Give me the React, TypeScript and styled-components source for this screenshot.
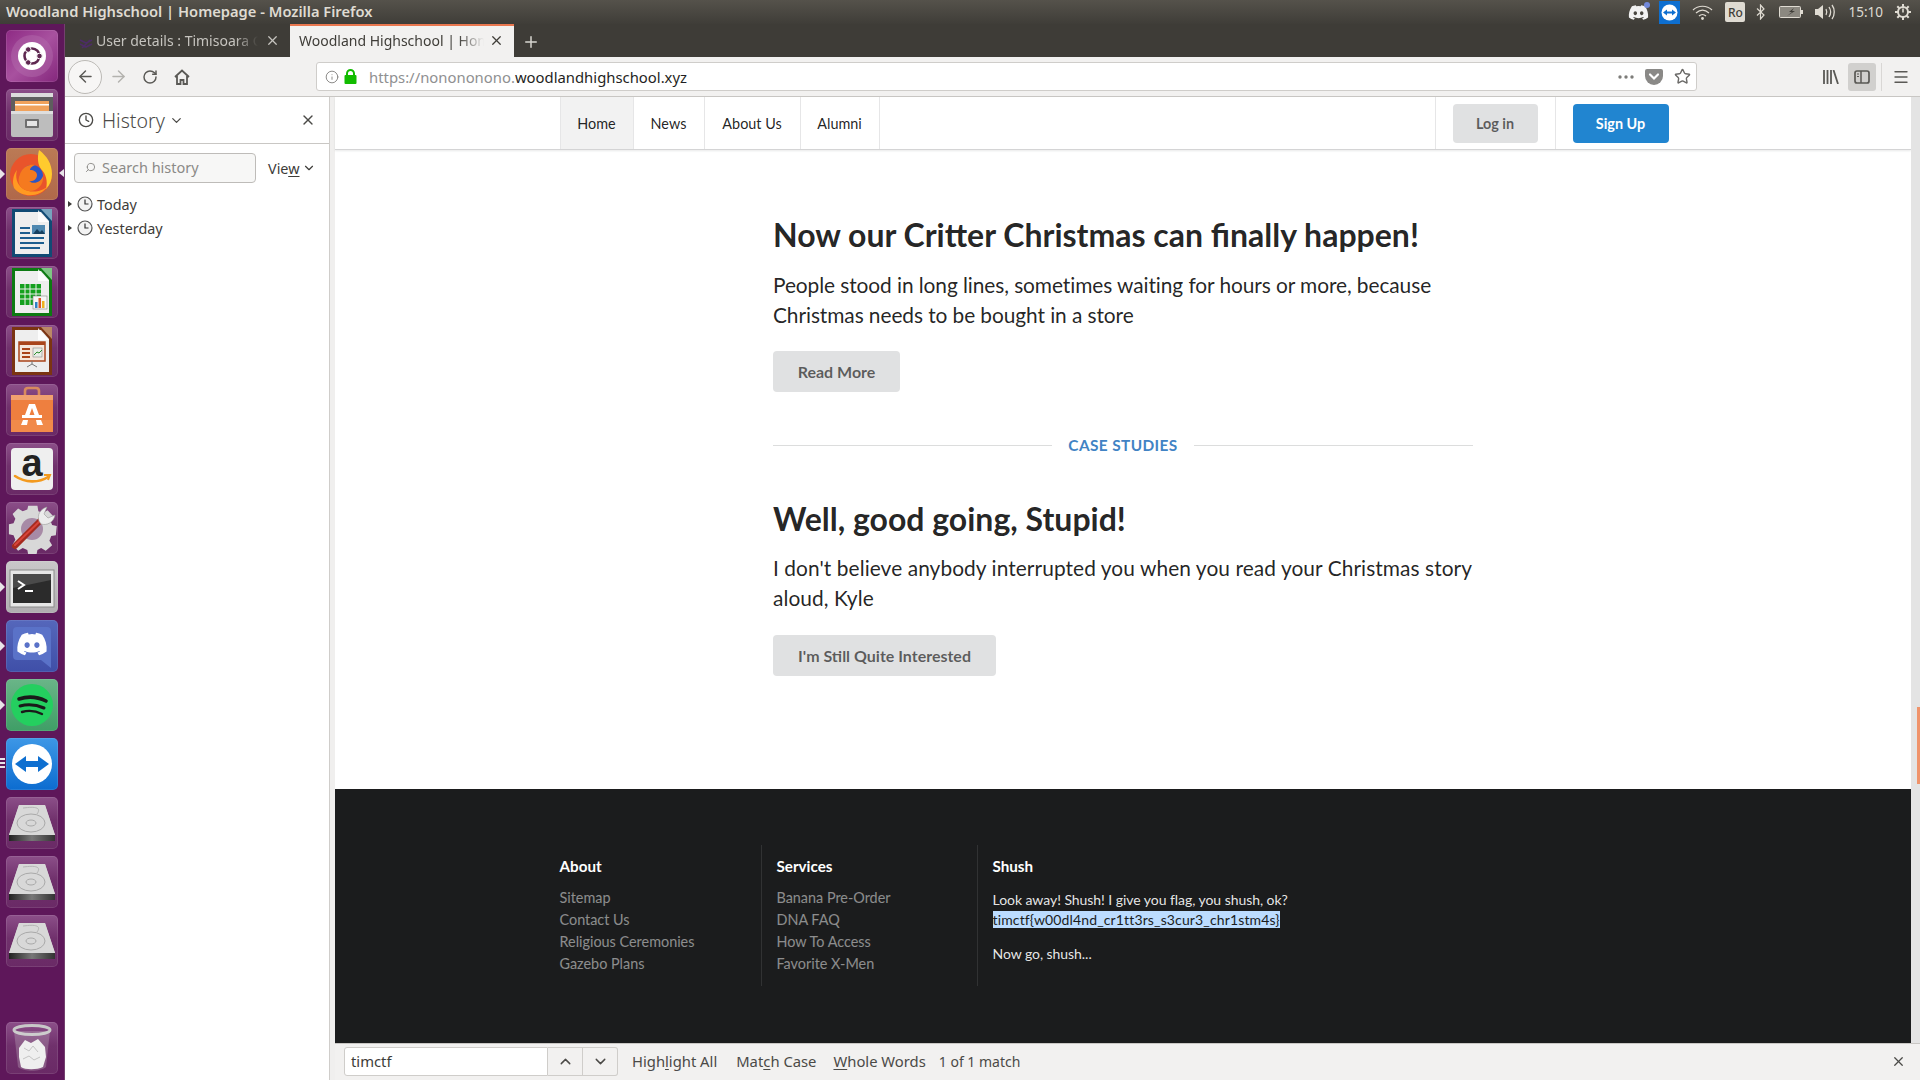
import React from 'react';
import styled, { createGlobalStyle } from 'styled-components';
import { FaDiscord } from 'react-icons/fa';
import { ArrowLeft, ArrowRight, RotateCw, Info, Star, Menu, X, ChevronDown, ChevronUp, Plus, Search, Clock } from 'lucide-react';

const GlobalStyle = createGlobalStyle`
    html, body {
        margin: 0;
        padding: 0;
        width: 1920px;
        height: 1080px;
        overflow: hidden;
        background: #fff;
    }
    * { box-sizing: border-box; }
`;

const uiFont = `'Noto Sans', 'Open Sans', sans-serif`;
const siteFont = `Lato, 'Liberation Sans', sans-serif`;

const Screen = styled.div`
    width: 1920px;
    height: 1080px;
    display: flex;
    flex-direction: column;
    font-family: ${uiFont};
`;

/* ---- ubuntu top panel ---- */
const TopPanel = styled.div`
    height: 24px;
    flex: none;
    display: flex;
    align-items: center;
    padding-left: 6px;
    background: linear-gradient(#55524b, #3f3d38);
`;

const WindowTitle = styled.div`
    flex: 1;
    color: #dfdbd2;
    font-size: 14.7px;
    font-weight: 600;
    padding-bottom: 2px;
`;

const Tray = styled.div`
    display: flex;
    align-items: center;
    height: 24px;
`;

const TrayItem = styled.div<{ $w: number; $mr?: number; $ml?: number }>`
    width: ${p => p.$w}px;
    margin-right: ${p => p.$mr || 0}px;
    margin-left: ${p => p.$ml || 0}px;
    height: 24px;
    display: flex;
    align-items: center;
    justify-content: center;
    position: relative;
`;

const TrayBadge = styled.span`
    position: absolute;
    right: 0;
    top: 2px;
    width: 6px;
    height: 6px;
    border-radius: 50%;
    background: #7289da;
`;

const TVSquare = styled.div`
    width: 21px;
    height: 23px;
    background: #0e6fd0;
    display: flex;
    align-items: center;
    justify-content: center;
`;

const RoBox = styled.div`
    width: 20px;
    height: 20px;
    border-radius: 2px;
    background: #dfdbd2;
    color: #3f3d38;
    font-size: 12px;
    font-weight: 500;
    display: flex;
    align-items: center;
    justify-content: center;
`;

const Time = styled.span`
    color: #dfdbd2;
    font-size: 13.5px;
`;

const Desktop = styled.div`
    flex: 1;
    display: flex;
    min-height: 0;
`;

/* ---- launcher ---- */
const Launcher = styled.div`
    width: 65px;
    flex: none;
    background: #5e175a;
    border-right: 1px solid #74406f;
    padding: 6px 0 0 6px;
    display: flex;
    flex-direction: column;
    gap: 7px;
`;

const Tile = styled.div<{ $bg?: string }>`
    width: 52px;
    height: 52px;
    border-radius: 5px;
    position: relative;
    flex: none;
    background: ${p => p.$bg || 'linear-gradient(#8c4f89, #70316c 45%, #6a2a66)'};
    box-shadow: inset 0 0 0 1px rgba(255, 255, 255, 0.1);
    svg { display: block; }
`;

const LauncherSpacer = styled.div`
    height: 41px;
    flex: none;
`;

const PipLeft = styled.span`
    position: absolute;
    left: -6px;
    top: 21px;
    width: 0;
    height: 0;
    border-top: 5px solid transparent;
    border-bottom: 5px solid transparent;
    border-left: 5px solid #e8e4e8;
`;

const PipRight = styled.span`
    position: absolute;
    right: -6px;
    top: 21px;
    width: 0;
    height: 0;
    border-top: 4px solid transparent;
    border-bottom: 4px solid transparent;
    border-right: 5px solid #e8e4e8;
`;

const PipDots = styled.span`
    position: absolute;
    left: -6px;
    top: 20px;
    width: 5px;
    height: 11px;
    background: repeating-linear-gradient(#e8e4e8 0 2px, transparent 2px 4px);
`;

const UbuntuIcon = () => (
    <svg width="52" height="52" viewBox="0 0 52 52">
        <circle cx="26" cy="26" r="21" fill="#b46cae" opacity="0.45" />
        <circle cx="26" cy="26" r="14" fill="#fff" />
        <circle cx="26" cy="26" r="7.5" fill="none" stroke="#5e2750" strokeWidth="2.6" />
        <circle cx="33.5" cy="26" r="2.8" fill="#5e2750" stroke="#fff" />
        <circle cx="22.2" cy="19.5" r="2.8" fill="#5e2750" stroke="#fff" />
        <circle cx="22.2" cy="32.5" r="2.8" fill="#5e2750" stroke="#fff" />
    </svg>
);

const FilesIcon = () => (
    <svg width="52" height="52" viewBox="0 0 52 52">
        <rect x="5" y="4" width="42" height="20" rx="2" fill="#5e5e5e" />
        <rect x="5" y="4" width="42" height="4" fill="#dcdcdc" />
        <rect x="9" y="12" width="34" height="11" fill="#f0a25c" />
        <rect x="9" y="15" width="34" height="1.5" fill="#fff" />
        <rect x="5" y="22" width="42" height="26" rx="2" fill="#bdbdbd" />
        <rect x="5" y="22" width="42" height="3" fill="#dedede" />
        <rect x="19" y="30" width="14" height="9" rx="1" fill="#6e6e6e" />
        <rect x="21" y="32" width="10" height="5" fill="#e4e4e4" />
    </svg>
);

const FirefoxIcon = () => (
    <svg width="52" height="52" viewBox="0 0 52 52">
        <circle cx="25" cy="27" r="21" fill="#e9542b" />
        <path d="M33 2c8 6 13 14 13 24 0 6-2 11-6 15 2-8 0-15-5-20-3-4-4-11-2-19z" fill="#ffcb2e" />
        <path d="M8 40c8 10 26 10 34-2-6 6-18 8-26 2-5-4-7-11-5-18-4 5-5 12-3 18z" fill="#ff9a22" />
        <circle cx="26" cy="28" r="11" fill="#2c55c5" />
        <path d="M15 24c3-6 9-8 14-7-3 1-5 3-5 5 4 0 7 2 7 5 0 4-4 7-8 6 5 4 12 1 14-5 1 8-5 15-13 15-8 0-13-7-11-14 1-2 1-4 2-5z" fill="#f57a1f" />
    </svg>
);

const DocIcon = ({ edge, corner, children }: { edge: string; corner: string; children: React.ReactNode }) => (
    <svg width="52" height="52" viewBox="0 0 52 52">
        <path d="M6 2h32l8 10v38H6z" fill={edge} />
        <path d="M35 2h11v12z" fill={corner} />
        <path d="M9 5h26l8 9v33H9z" fill="#eeeeee" />
        <path d="M32 3l11 12-11 0z" fill="#fff" opacity="0.8" />
        {children}
    </svg>
);

const WriterIcon = () => (
    <DocIcon edge="#114a74" corner="#77a3bd">
        <rect x="14" y="20" width="10" height="2" fill="#1d5e8f" />
        <rect x="14" y="25" width="10" height="2" fill="#1d5e8f" />
        <rect x="14" y="30" width="24" height="2" fill="#1d5e8f" />
        <rect x="14" y="35" width="24" height="2" fill="#1d5e8f" />
        <rect x="14" y="40" width="20" height="2" fill="#1d5e8f" />
        <rect x="26" y="18" width="13" height="9" fill="#4f88b0" />
        <path d="M27 27l4-5 3 3 2-2 3 4z" fill="#17405f" />
    </DocIcon>
);

const CalcIcon = () => (
    <DocIcon edge="#0d7a12" corner="#7fc584">
        <rect x="14" y="18" width="21" height="21" fill="#14a01e" />
        <path d="M19 18v21M24 18v21M30 18v21M14 23h21M14 28h21M14 33h21" stroke="#eee" strokeWidth="1" />
        <rect x="27" y="30" width="14" height="13" fill="#f5f5f5" stroke="#888" strokeWidth="0.6" />
        <rect x="29" y="36" width="2.5" height="6" fill="#2f7fc4" />
        <rect x="32.5" y="32" width="2.5" height="10" fill="#d9552a" />
        <rect x="36" y="35" width="2.5" height="7" fill="#eeb21e" />
    </DocIcon>
);

const ImpressIcon = () => (
    <DocIcon edge="#7b3412" corner="#bb8866">
        <rect x="13" y="17" width="26" height="19" fill="#f4e6dc" stroke="#a9441b" strokeWidth="1.5" />
        <rect x="13" y="17" width="26" height="3" fill="#a9441b" />
        <rect x="16" y="23" width="8" height="2" fill="#a9441b" />
        <rect x="16" y="27" width="8" height="2" fill="#a9441b" />
        <rect x="16" y="31" width="8" height="2" fill="#a9441b" />
        <rect x="27" y="23" width="9" height="9" fill="#e8ece6" stroke="#7a7a7a" strokeWidth="0.5" />
        <path d="M28 30l3-3 2 1 3-3" stroke="#2a8c2a" fill="none" />
        <path d="M26 36v3M26 39l-5 3M26 39l5 3" stroke="#777" />
    </DocIcon>
);

const StoreIcon = () => (
    <svg width="52" height="52" viewBox="0 0 52 52">
        <path d="M19 12V7c0-2 1-3 3-3h8c2 0 3 1 3 3v5" fill="none" stroke="#d88a5e" strokeWidth="2.6" />
        <path d="M5 11h42v37H5z" fill="#ee7f3f" />
        <path d="M5 11h42v5H5z" fill="#f0a06f" />
        <path d="M5 36h42v12H5z" fill="#f18a4a" />
        <path d="M23 20h6l4 11h3v3H16v-3h3zM26 24l-2.5 7h5z" fill="#fff" fillRule="evenodd" />
        <path d="M17 36h5l-1 5h-6zM30 36h5l2 5h-6z" fill="#fff" />
    </svg>
);

const AmazonLetter = styled.text`
    font-family: 'Liberation Sans', sans-serif;
    font-size: 38px;
    font-weight: 700;
`;

const AmazonIcon = () => (
    <svg width="52" height="52" viewBox="0 0 52 52">
        <rect x="5" y="5" width="42" height="42" rx="4" fill="#efefef" />
        <AmazonLetter x="26" y="33" textAnchor="middle" fill="#222">a</AmazonLetter>
        <path d="M9 33c10 7 24 7 33 1" fill="none" stroke="#f39a1f" strokeWidth="2.6" strokeLinecap="round" />
        <path d="M38 32l6 0-2 5" fill="none" stroke="#f39a1f" strokeWidth="2" />
    </svg>
);

const ToolsIcon = () => (
    <svg width="52" height="52" viewBox="0 0 52 52">
        <path d="M22 3h10l1 6 5 2 5-3 6 6-3 5 2 5 5 1-1 10-5 1-2 5 3 5-7 6-5-3-4 2-1 5H22l-1-5-5-2-5 3-6-7 3-5-2-5-5-1V23l5-1 2-5-3-5 6-6 5 3 5-2z" fill="#d8d8d8" transform="translate(2 1) scale(0.92)" />
        <circle cx="26" cy="27" r="11" fill="#a78aa6" />
        <path d="M9 44L36 17" stroke="#a52a1e" strokeWidth="6" strokeLinecap="round" />
        <path d="M9 43L36 17" stroke="#d8443a" strokeWidth="2" strokeLinecap="round" />
        <path d="M33 19c-2-6 1-12 8-14l-3 7 4 4 7-3c-1 7-8 11-14 9z" fill="#ececec" stroke="#999" strokeWidth="0.6" />
    </svg>
);

const TerminalIcon = () => (
    <svg width="52" height="52" viewBox="0 0 52 52">
        <rect x="4" y="9" width="44" height="37" fill="#e6e6e6" stroke="#8a8a8a" />
        <rect x="7" y="13" width="38" height="29" fill="#2b2b2b" />
        <path d="M7 13h38v6L7 27z" fill="#4a4a4a" />
        <path d="M12 20l6 4-6 4" fill="none" stroke="#fff" strokeWidth="2" />
        <rect x="19" y="29" width="8" height="2" fill="#fff" />
    </svg>
);

const DiscordIcon = () => (
    <svg width="52" height="52" viewBox="0 0 52 52">
        <path d="M11 7h30a4 4 0 0 1 4 4v37L35 40H11a4 4 0 0 1-4-4V11a4 4 0 0 1 4-4z" fill="#5a72c8" />
        <foreignObject x="10" y="8" width="32" height="32">
            <FaDiscord size={32} color="#fff" />
        </foreignObject>
    </svg>
);

const SpotifyIcon = () => (
    <svg width="52" height="52" viewBox="0 0 52 52">
        <circle cx="26" cy="26" r="21" fill="#24cf5f" />
        <path d="M13 20c9-3 19-2 27 2" fill="none" stroke="#1a1a1a" strokeWidth="3.6" strokeLinecap="round" />
        <path d="M14 27c8-2 17-1 24 2" fill="none" stroke="#1a1a1a" strokeWidth="3" strokeLinecap="round" />
        <path d="M16 33c7-2 14-1 20 2" fill="none" stroke="#1a1a1a" strokeWidth="2.4" strokeLinecap="round" />
    </svg>
);

const TvTrayGlyph = () => (
    <svg width="17" height="17" viewBox="0 0 17 17">
        <circle cx="8.5" cy="8.5" r="8" fill="#fff" />
        <path d="M2 8.5l4-3v2h5v-2l4 3-4 3v-2H6v2z" fill="#0e6fd0" />
    </svg>
);

const TeamViewerIcon = () => (
    <svg width="52" height="52" viewBox="0 0 52 52">
        <circle cx="26" cy="26" r="20" fill="#fff" />
        <path d="M9 26l11-8v5h12v-5l11 8-11 8v-5H20v5z" fill="#0e6fd0" />
    </svg>
);

const DiskIcon = () => (
    <svg width="52" height="52" viewBox="0 0 52 52">
        <path d="M13 8h26l10 30v5H3v-5z" fill="#c8c8c8" />
        <path d="M13 8h26l10 30H3z" fill="#d8d8d8" />
        <ellipse cx="25" cy="26" rx="14" ry="9" fill="none" stroke="#a9a9a9" />
        <ellipse cx="25" cy="26" rx="5" ry="3" fill="none" stroke="#a9a9a9" />
        <path d="M17 11c8-1 20-2 14 6" fill="none" stroke="#b4b4b4" />
        <path d="M3 38h46v6H3z" fill="url(#diskEdge)" />
        <defs>
            <linearGradient id="diskEdge">
                <stop offset="0" stopColor="#222" />
                <stop offset="0.5" stopColor="#777" />
                <stop offset="1" stopColor="#333" />
            </linearGradient>
        </defs>
    </svg>
);

const TrashIcon = () => (
    <svg width="52" height="52" viewBox="0 0 52 52">
        <ellipse cx="26" cy="8" rx="18" ry="4.5" fill="none" stroke="#c8c8c8" strokeWidth="3" />
        <path d="M8 9l4 36c6 5 22 5 28 0l4-36" fill="rgba(220,220,220,0.25)" />
        <path d="M13 26l6-8 6 3 7-4 7 8 1 10-3 10c-6 3-18 3-22 0l-2-10z" fill="#efefef" />
        <path d="M18 26l5 3 4-5 5 6M17 37l6-3 5 4 6-3" fill="none" stroke="#c4c4c4" />
    </svg>
);

/* ---- firefox window ---- */
const Browser = styled.div`
    flex: 1;
    min-width: 0;
    display: flex;
    flex-direction: column;
`;

const TabStrip = styled.div`
    height: 33px;
    flex: none;
    background: #3e3c37;
    display: flex;
    padding-top: 2px;
    padding-left: 5px;
`;

const Tab = styled.div<{ $active?: boolean }>`
    width: ${p => (p.$active ? 224 : 220)}px;
    display: flex;
    align-items: center;
    padding: 0 10px 2px ${p => (p.$active ? 9 : 26)}px;
    position: relative;
    background: ${p => (p.$active ? '#f2f1f0' : 'transparent')};
    color: ${p => (p.$active ? '#3f3d38' : '#c6c4bf')};
    border-top: ${p => (p.$active ? '2px solid #e9774f' : '0')};
    margin-top: ${p => (p.$active ? -2 : 0)}px;
    height: ${p => (p.$active ? 33 : 31)}px;
    font-size: 14px;
`;

const TabLabel = styled.span<{ $mr: number }>`
    flex: 1;
    margin-right: ${p => p.$mr}px;
    white-space: nowrap;
    overflow: hidden;
    -webkit-mask-image: linear-gradient(90deg, #000 86%, transparent);
    mask-image: linear-gradient(90deg, #000 86%, transparent);
`;

const TabFavicon = styled.div`
    position: absolute;
    left: 9px;
    top: 9px;
    width: 14px;
    height: 12px;
`;

const NewTab = styled.div`
    width: 34px;
    display: flex;
    align-items: center;
    justify-content: center;
    color: #d8d6d1;
`;

const Toolbar = styled.div`
    height: 40px;
    flex: none;
    background: #f2f1f0;
    border-bottom: 1px solid #c9c7c4;
    display: flex;
    align-items: center;
    padding-left: 3px;
    color: #5a5955;
`;

const BackButton = styled.div`
    width: 34px;
    height: 34px;
    border-radius: 50%;
    border: 1px solid #bcbab6;
    background: #f7f6f5;
    display: flex;
    align-items: center;
    justify-content: center;
    flex: none;
`;

const ToolButton = styled.div<{ $muted?: boolean; $w?: number; $on?: boolean; $ml?: number }>`
    width: ${p => p.$w || 32}px;
    height: 28px;
    flex: none;
    margin-left: ${p => p.$ml || 0}px;
    border-radius: 3px;
    display: flex;
    align-items: center;
    justify-content: center;
    color: ${p => (p.$muted ? '#b3b2ae' : '#5a5955')};
    background: ${p => (p.$on ? '#d1d0ce' : 'transparent')};
`;

const UrlBar = styled.div`
    width: 1381px;
    margin-left: 118px;
    height: 29px;
    flex: none;
    background: #fff;
    border: 1px solid #cfcdca;
    border-radius: 3px;
    display: flex;
    align-items: center;
    padding-left: 8px;
    font-size: 14.85px;
`;

const UrlText = styled.div`
    flex: 1;
    margin-left: 8px;
    color: #8f9091;
    white-space: nowrap;
    b {
        color: #1f1f23;
        font-weight: 400;
    }
`;

const UrlActions = styled.div`
    display: flex;
    align-items: center;
    gap: 11px;
    padding-right: 5px;
    color: #6b6a68;
`;

const ToolbarEnd = styled.div`
    margin-left: 124px;
    display: flex;
    align-items: center;
`;

const ToolbarDivider = styled.div`
    width: 1px;
    height: 28px;
    background: #d9d7d5;
    margin: 0 5px;
`;

const BrowserBody = styled.div`
    flex: 1;
    min-height: 0;
    display: flex;
`;

/* ---- history sidebar ---- */
const Sidebar = styled.div`
    width: 264px;
    flex: none;
    background: #fff;
    color: #3d3c39;
    font-size: 14.4px;
    display: flex;
    flex-direction: column;
`;

const SidebarHeader = styled.div`
    height: 47px;
    flex: none;
    border-bottom: 1px solid #c9c7c4;
    display: flex;
    align-items: center;
    padding: 0 13px 0 13px;
    color: #4b4a47;
`;

const SidebarTitle = styled.div`
    font-size: 19.5px;
    font-weight: 300;
    margin-left: 8px;
    display: flex;
    align-items: center;
    gap: 4px;
    flex: 1;
`;

const SearchRow = styled.div`
    display: flex;
    align-items: center;
    padding: 9px 0 0 9px;
`;

const SearchBox = styled.div`
    width: 182px;
    height: 30px;
    border: 1px solid #bebcb9;
    border-radius: 4px;
    background: #f7f7f6;
    display: flex;
    align-items: center;
    padding: 0 0 2px 10px;
    gap: 6px;
    color: #8b8a87;
    font-size: 14.5px;
`;

const ViewLabel = styled.div`
    margin-left: 12px;
    display: flex;
    align-items: center;
    gap: 2px;
    font-size: 14.4px;
    u { text-underline-offset: 2px; }
`;

const Tree = styled.div`
    padding-top: 9px;
`;

const TreeRow = styled.div`
    height: 24px;
    display: flex;
    align-items: center;
    padding-left: 3px;
`;

const Twisty = styled.span`
    width: 0;
    height: 0;
    border-top: 3px solid transparent;
    border-bottom: 3px solid transparent;
    border-left: 4px solid #3d3c39;
    margin-right: 5px;
`;

const TreeLabel = styled.span`
    margin-left: 4px;
`;

const Splitter = styled.div`
    width: 6px;
    flex: none;
    background: #f0efee;
    border-left: 1px solid #cfcdca;
`;

const Content = styled.div`
    flex: 1;
    min-width: 0;
    display: flex;
    flex-direction: column;
`;

const Viewport = styled.div`
    flex: 1;
    min-height: 0;
    display: flex;
`;

/* ---- the web page ---- */
const Page = styled.div`
    flex: 1;
    min-width: 0;
    display: flex;
    flex-direction: column;
    font-family: ${siteFont};
    background: #fff;
`;

const NavBar = styled.div`
    height: 53px;
    flex: none;
    border-bottom: 1px solid #d4d4d5;
    box-shadow: 0 1px 2px rgba(34, 36, 38, 0.1);
    display: flex;
    justify-content: center;
`;

const NavInner = styled.div`
    width: 1127px;
    display: flex;
    align-items: stretch;
`;

const NavItem = styled.div<{ $active?: boolean; $w: number; $first?: boolean }>`
    width: ${p => p.$w}px;
    display: flex;
    align-items: center;
    justify-content: center;
    font-size: 14.4px;
    color: rgba(0, 0, 0, 0.87);
    background: ${p => (p.$active ? '#f2f2f2' : 'transparent')};
    border-right: 1px solid #e6e6e7;
    border-left: ${p => (p.$first ? '1px solid #e6e6e7' : '0')};
`;

const NavRight = styled.div`
    margin-left: auto;
    margin-right: 1px;
    display: flex;
    align-items: center;
    height: 100%;
`;

const NavSlot = styled.div`
    height: 100%;
    display: flex;
    align-items: center;
    padding: 0 17px;
    border-left: 1px solid #e6e6e7;
`;

const Button = styled.div<{ $primary?: boolean; $w?: number; $h?: number }>`
    width: ${p => p.$w}px;
    height: ${p => p.$h || 41}px;
    display: flex;
    align-items: center;
    justify-content: center;
    border-radius: 4px;
    font-weight: 700;
    font-size: ${p => (p.$h ? 14.4 : 16)}px;
    background: ${p => (p.$primary ? '#2185d0' : '#e0e1e2')};
    color: ${p => (p.$primary ? '#fff' : 'rgba(0, 0, 0, 0.6)')};
`;

const Main = styled.div`
    flex: 1;
    width: 700px;
    align-self: center;
    padding-top: 65px;
`;

const Heading = styled.h1<{ $mb: number }>`
    margin: 0 0 ${p => p.$mb}px;
    font-size: 32px;
    line-height: 40px;
    font-weight: 700;
    color: rgba(0, 0, 0, 0.87);
`;

const Lead = styled.p<{ $mb: number; $ls: number }>`
    margin: 0 0 ${p => p.$mb}px;
    font-size: 20.9px;
    line-height: 30px;
    letter-spacing: ${p => p.$ls}px;
    color: rgba(0, 0, 0, 0.87);
`;

const Divider = styled.div`
    display: flex;
    align-items: center;
    height: 20px;
    margin: 43px 0 44px;
    gap: 16px;
    font-size: 15.4px;
    font-weight: 700;
    letter-spacing: 0.4px;
    color: #4183c4;
    &::before, &::after {
        content: '';
        flex: 1;
        height: 1px;
        background: #dcdddd;
    }
`;

const Footer = styled.div`
    height: 254px;
    flex: none;
    background: #1b1c1d;
    display: flex;
    justify-content: center;
    padding-top: 56px;
`;

const FooterInner = styled.div`
    width: 1127px;
    height: 141px;
    display: flex;
`;

const FooterCol = styled.div<{ $w: number; $line?: boolean; $first?: boolean }>`
    width: ${p => p.$w}px;
    height: 100%;
    padding-left: ${p => (p.$first ? 0 : 15)}px;
    padding-top: 11px;
    border-right: ${p => (p.$line ? '1px solid #313233' : '0')};
`;

const FooterTitle = styled.div`
    color: #fff;
    font-size: 15.2px;
    font-weight: 700;
    line-height: 20px;
    margin-bottom: 11px;
`;

const FooterLink = styled.div`
    color: rgba(255, 255, 255, 0.5);
    font-size: 14.4px;
    line-height: 22px;
`;

const FooterText = styled.div<{ $mt: number }>`
    color: rgba(255, 255, 255, 0.9);
    font-size: 14px;
    line-height: 20px;
    letter-spacing: -0.05px;
    margin-top: ${p => p.$mt}px;
`;

const Flag = styled.span`
    background: #bcdcff;
    color: #1b1c1d;
    letter-spacing: 0.14px;
`;

const ScrollTrack = styled.div`
    width: 9px;
    flex: none;
    background: #e4e4e4;
    position: relative;
`;

const ScrollMark = styled.div`
    position: absolute;
    right: 0;
    top: 610px;
    width: 3px;
    height: 77px;
    background: #f0936a;
`;

/* ---- find bar ---- */
const FindBar = styled.div`
    height: 37px;
    flex: none;
    background: #f2f1f0;
    border-top: 1px solid #c9c7c4;
    display: flex;
    align-items: center;
    padding: 0 14px 2px 9px;
    font-size: 14.8px;
    color: #4b4a47;
    u { text-underline-offset: 2px; }
`;

const FindInput = styled.div`
    width: 204px;
    height: 29px;
    background: #fff;
    border: 1px solid #cfcdca;
    border-radius: 3px 0 0 3px;
    display: flex;
    align-items: center;
    padding-left: 6px;
    color: #3d3c39;
`;

const FindStep = styled.div<{ $last?: boolean }>`
    width: 35px;
    height: 29px;
    border: 1px solid #cfcdca;
    border-left: 0;
    border-radius: ${p => (p.$last ? '0 3px 3px 0' : '0')};
    display: flex;
    align-items: center;
    justify-content: center;
`;

const FindOption = styled.span<{ $ml: number }>`
    margin-left: ${p => p.$ml}px;
`;

const FindCount = styled.span`
    margin-left: 13px;
    font-size: 14px;
`;

const FindClose = styled.div`
    margin-left: auto;
    display: flex;
`;

const PocketIcon = () => (
    <svg width="18" height="16" viewBox="0 0 18 16">
        <path d="M2 0h14a2 2 0 0 1 2 2v5a9 9 0 0 1-18 0V2a2 2 0 0 1 2-2z" fill="#8a8987" />
        <path d="M5 5.5l4 4 4-4" fill="none" stroke="#fff" strokeWidth="2.2" strokeLinecap="round" />
    </svg>
);

const GreenLock = () => (
    <svg width="13" height="15" viewBox="0 0 13 15">
        <path d="M3 6V4.5a3.5 3.5 0 0 1 7 0V6" fill="none" stroke="#12bc00" strokeWidth="2" />
        <rect x="0.5" y="6" width="12" height="9" rx="1" fill="#12bc00" />
    </svg>
);

const HomeGlyph = () => (
    <svg width="16" height="16" viewBox="0 0 16 16">
        <path d="M1 8l7-6.5L15 8M3 7v8h3.5v-4h3v4H13V7" fill="none" stroke="#5a5955" strokeWidth="1.8" />
    </svg>
);

const LibraryGlyph = () => (
    <svg width="16" height="14" viewBox="0 0 16 14">
        <path d="M1 0v14M4.5 0v14M8 0v14M10.5 0l4.5 14" stroke="#5a5955" strokeWidth="1.8" fill="none" />
    </svg>
);

const SidebarGlyph = () => (
    <svg width="16" height="14" viewBox="0 0 16 14">
        <rect x="1" y="1" width="14" height="12" rx="2" fill="none" stroke="#5a5955" strokeWidth="1.7" />
        <path d="M7 1v12" stroke="#5a5955" strokeWidth="1.5" />
        <path d="M3 4h2M3 6.5h2" stroke="#5a5955" />
    </svg>
);

const TreeClock = () => (
    <svg width="16" height="16" viewBox="0 0 16 16">
        <circle cx="8" cy="8" r="7" fill="#f3f3f3" stroke="#555" strokeWidth="1.2" />
        <path d="M8 3.5V8h3.5" fill="none" stroke="#333" strokeWidth="1.2" />
    </svg>
);

const Wifi = () => (
    <svg width="21" height="15" viewBox="0 0 21 15">
        <path d="M1 5c5-5 14-5 19 0M4 8c4-3.5 9-3.5 13 0M7 11c2-2 5-2 7 0" fill="none" stroke="#dfdbd2" strokeWidth="1.2" />
        <circle cx="10.5" cy="13.5" r="1.4" fill="#dfdbd2" />
    </svg>
);

const Bluetooth = () => (
    <svg width="9" height="16" viewBox="0 0 9 16">
        <path d="M1 4.5l7 6.5-3.5 4V1L8 5l-7 6.5" fill="none" stroke="#dfdbd2" strokeWidth="1.2" />
    </svg>
);

const Battery = () => (
    <svg width="24" height="12" viewBox="0 0 24 12">
        <rect x="0.5" y="0.5" width="21" height="11" rx="1" fill="#8b8880" stroke="#dfdbd2" />
        <rect x="22" y="4" width="2" height="4" fill="#dfdbd2" />
        <path d="M15 2l-5 4h3l-5 4 8-5h-3z" fill="#3f3d38" />
    </svg>
);

const Volume = () => (
    <svg width="20" height="16" viewBox="0 0 20 16">
        <path d="M0 5h3l5-4v14l-5-4H0z" fill="#dfdbd2" />
        <path d="M11 5c1 2 1 4 0 6M14 3c2 3 2 7 0 10M17 1c3 4 3 10 0 14" fill="none" stroke="#dfdbd2" strokeWidth="1.3" />
    </svg>
);

const PowerGear = () => (
    <svg width="16" height="16" viewBox="0 0 16 16">
        <circle cx="8" cy="8" r="5" fill="none" stroke="#dfdbd2" strokeWidth="2" />
        <path d="M8 0v3M8 13v3M0 8h3M13 8h3M2.3 2.3l2 2M11.7 11.7l2 2M2.3 13.7l2-2M11.7 4.3l2-2" stroke="#dfdbd2" strokeWidth="2" />
        <path d="M8 4.5v4" stroke="#dfdbd2" strokeWidth="1.6" />
    </svg>
);

const App = () => (
    <>
        <GlobalStyle />
        <Screen>
            <TopPanel>
                <WindowTitle>Woodland Highschool | Homepage - Mozilla Firefox</WindowTitle>
                <Tray>
                    <TrayItem $w={24} $mr={9}>
                        <FaDiscord size={21} color="#f2f2f2" />
                        <TrayBadge />
                    </TrayItem>
                    <TrayItem $w={21} $mr={12}>
                        <TVSquare><TvTrayGlyph /></TVSquare>
                    </TrayItem>
                    <TrayItem $w={21} $mr={12}><Wifi /></TrayItem>
                    <TrayItem $w={20} $mr={10}><RoBox>Ro</RoBox></TrayItem>
                    <TrayItem $w={10} $mr={14}><Bluetooth /></TrayItem>
                    <TrayItem $w={24} $mr={12}><Battery /></TrayItem>
                    <TrayItem $w={20} $mr={13}><Volume /></TrayItem>
                    <Time>15:10</Time>
                    <TrayItem $w={16} $mr={9} $ml={12}><PowerGear /></TrayItem>
                </Tray>
            </TopPanel>
            <Desktop>
                <Launcher>
                    <Tile $bg="linear-gradient(135deg, #8e2a84, #a8519f 50%, #84277c)"><UbuntuIcon /></Tile>
                    <Tile><FilesIcon /></Tile>
                    <Tile $bg="linear-gradient(#bb7a55, #b0684a)"><PipLeft /><FirefoxIcon /><PipRight /></Tile>
                    <Tile><WriterIcon /></Tile>
                    <Tile><CalcIcon /></Tile>
                    <Tile><ImpressIcon /></Tile>
                    <Tile><StoreIcon /></Tile>
                    <Tile><AmazonIcon /></Tile>
                    <Tile><ToolsIcon /></Tile>
                    <Tile $bg="linear-gradient(#c9c7c9, #b0adb0)"><PipLeft /><TerminalIcon /></Tile>
                    <Tile $bg="linear-gradient(#5567bb, #3f4fa8)"><PipLeft /><DiscordIcon /></Tile>
                    <Tile $bg="linear-gradient(#6ab588, #3f9e66)"><PipLeft /><SpotifyIcon /></Tile>
                    <Tile $bg="linear-gradient(#3d97e6, #0c6cd0)"><PipDots /><TeamViewerIcon /></Tile>
                    <Tile><DiskIcon /></Tile>
                    <Tile><DiskIcon /></Tile>
                    <Tile><DiskIcon /></Tile>
                    <LauncherSpacer />
                    <Tile><TrashIcon /></Tile>
                </Launcher>
                <Browser>
                    <TabStrip>
                        <Tab>
                            <TabFavicon>
                                <svg width="14" height="12" viewBox="0 0 14 12">
                                    <path d="M1 2l6 3 6-3M1 6l6 3 6-3M3 10l8-8" fill="none" stroke="#4c2c66" strokeWidth="1.6" />
                                </svg>
                            </TabFavicon>
                            <TabLabel $mr={7}>User details : Timisoara CTF</TabLabel>
                            <X size={15} />
                        </Tab>
                        <Tab $active>
                            <TabLabel $mr={5}>Woodland Highschool | Homepage</TabLabel>
                            <X size={15} />
                        </Tab>
                        <NewTab><Plus size={18} /></NewTab>
                    </TabStrip>
                    <Toolbar>
                        <BackButton><ArrowLeft size={19} strokeWidth={1.8} /></BackButton>
                        <ToolButton $muted><ArrowRight size={19} strokeWidth={1.8} /></ToolButton>
                        <ToolButton><RotateCw size={16} strokeWidth={2.2} /></ToolButton>
                        <ToolButton><HomeGlyph /></ToolButton>
                        <UrlBar>
                            <Info size={14} strokeWidth={1.5} color="#7d7c79" />
                            <ToolButton $w={22}><GreenLock /></ToolButton>
                            <UrlText>https://nonononono.<b>woodlandhighschool.xyz</b></UrlText>
                            <UrlActions>
                                <svg width="16" height="4" viewBox="0 0 16 4" fill="#7d7c79">
                                    <circle cx="2" cy="2" r="1.7" /><circle cx="8" cy="2" r="1.7" /><circle cx="14" cy="2" r="1.7" />
                                </svg>
                                <PocketIcon />
                                <Star size={17} strokeWidth={2} />
                            </UrlActions>
                        </UrlBar>
                        <ToolbarEnd>
                            <ToolButton $w={20}><LibraryGlyph /></ToolButton>
                            <ToolButton $w={28} $on $ml={7}><SidebarGlyph /></ToolButton>
                            <ToolbarDivider />
                            <ToolButton $w={28}><Menu size={18} strokeWidth={1.8} /></ToolButton>
                        </ToolbarEnd>
                    </Toolbar>
                    <BrowserBody>
                        <Sidebar>
                            <SidebarHeader>
                                <Clock size={16} strokeWidth={2} />
                                <SidebarTitle>History<ChevronDown size={15} /></SidebarTitle>
                                <X size={16} strokeWidth={2} />
                            </SidebarHeader>
                            <SearchRow>
                                <SearchBox><Search size={11} style={{ transform: 'scaleX(-1)' }} />Search history</SearchBox>
                                <ViewLabel><span>Vie<u>w</u></span><ChevronDown size={14} /></ViewLabel>
                            </SearchRow>
                            <Tree>
                                <TreeRow><Twisty /><TreeClock /><TreeLabel>Today</TreeLabel></TreeRow>
                                <TreeRow><Twisty /><TreeClock /><TreeLabel>Yesterday</TreeLabel></TreeRow>
                            </Tree>
                        </Sidebar>
                        <Splitter />
                        <Content>
                            <Viewport>
                                <Page>
                                    <NavBar>
                                        <NavInner>
                                            <NavItem $w={74} $active $first>Home</NavItem>
                                            <NavItem $w={71}>News</NavItem>
                                            <NavItem $w={96}>About Us</NavItem>
                                            <NavItem $w={79}>Alumni</NavItem>
                                            <NavRight>
                                                <NavSlot><Button $w={85} $h={39}>Log in</Button></NavSlot>
                                                <NavSlot><Button $w={96} $h={39} $primary>Sign Up</Button></NavSlot>
                                            </NavRight>
                                        </NavInner>
                                    </NavBar>
                                    <Main>
                                        <Heading $mb={15}>Now our Critter Christmas can finally happen!</Heading>
                                        <Lead $mb={21} $ls={-0.085}>People stood in long lines, sometimes waiting for hours or more, because Christmas needs to be bought in a store</Lead>
                                        <Button $w={127}>Read More</Button>
                                        <Divider>CASE STUDIES</Divider>
                                        <Heading $mb={14}>Well, good going, Stupid!</Heading>
                                        <Lead $mb={22} $ls={0.066}>I don't believe anybody interrupted you when you read your Christmas story aloud, Kyle</Lead>
                                        <Button $w={223}>I'm Still Quite Interested</Button>
                                    </Main>
                                    <Footer>
                                        <FooterInner>
                                            <FooterCol $w={202} $line $first>
                                                <FooterTitle>About</FooterTitle>
                                                <FooterLink>Sitemap</FooterLink>
                                                <FooterLink>Contact Us</FooterLink>
                                                <FooterLink>Religious Ceremonies</FooterLink>
                                                <FooterLink>Gazebo Plans</FooterLink>
                                            </FooterCol>
                                            <FooterCol $w={216} $line>
                                                <FooterTitle>Services</FooterTitle>
                                                <FooterLink>Banana Pre-Order</FooterLink>
                                                <FooterLink>DNA FAQ</FooterLink>
                                                <FooterLink>How To Access</FooterLink>
                                                <FooterLink>Favorite X-Men</FooterLink>
                                            </FooterCol>
                                            <FooterCol $w={500}>
                                                <FooterTitle>Shush</FooterTitle>
                                                <FooterText $mt={14}>
                                                    Look away! Shush! I give you flag, you shush, ok?
                                                    <br />
                                                    <Flag>timctf{'{'}w00dl4nd_cr1tt3rs_s3cur3_chr1stm4s{'}'}</Flag>
                                                </FooterText>
                                                <FooterText $mt={14}>Now go, shush...</FooterText>
                                            </FooterCol>
                                        </FooterInner>
                                    </Footer>
                                </Page>
                                <ScrollTrack><ScrollMark /></ScrollTrack>
                            </Viewport>
                            <FindBar>
                                <FindInput>timctf</FindInput>
                                <FindStep><ChevronUp size={17} strokeWidth={2} /></FindStep>
                                <FindStep $last><ChevronDown size={17} strokeWidth={2} /></FindStep>
                                <FindOption $ml={14}>High<u>l</u>ight All</FindOption>
                                <FindOption $ml={19}>Mat<u>c</u>h Case</FindOption>
                                <FindOption $ml={17}><u>W</u>hole Words</FindOption>
                                <FindCount>1 of 1 match</FindCount>
                                <FindClose><X size={15} strokeWidth={2} /></FindClose>
                            </FindBar>
                        </Content>
                    </BrowserBody>
                </Browser>
            </Desktop>
        </Screen>
    </>
);

export default App;
